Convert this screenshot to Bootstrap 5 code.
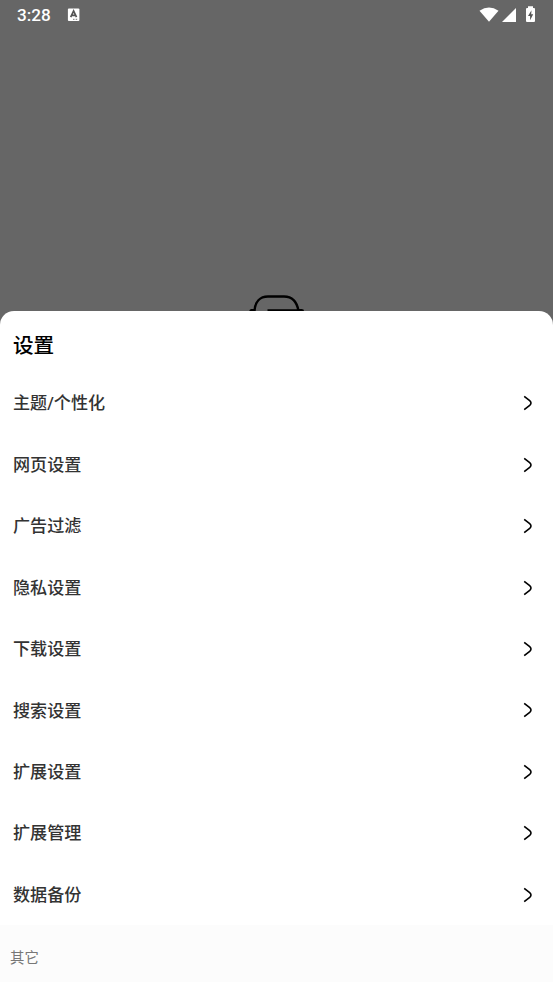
<!DOCTYPE html>
<html lang="zh-CN">
<head>
<meta charset="utf-8">
<meta name="viewport" content="width=device-width, initial-scale=1">
<title>设置</title>
<link href="https://cdn.jsdelivr.net/npm/bootstrap@5.3.0/dist/css/bootstrap.min.css" rel="stylesheet">
<style>
body{height:983px;background:#666;font-family:Roboto,"Noto Sans CJK SC",sans-serif}
.status-strip{height:30px;padding:0 17px;color:#fff;font-size:17.2px;font-weight:500;line-height:30px}
.backdrop-area{height:281px}
.sheet{height:672px;border-radius:14px 14px 0 0}
.sheet-title{height:61.5px;padding:9px 13px 0;font-size:20.6px;font-weight:500;color:#000}
.setting-row{height:61.45px;padding:0 20px 0 13px;font-size:17.1px;font-weight:500;color:#333}
.setting-row span{padding-top:2px}
.section-label{height:57px;padding:9px 10px 0;font-size:14.4px;color:#777;background:#fcfcfc}
svg{display:block;flex:none}
</style>
<script src="https://cdn.jsdelivr.net/npm/bootstrap@5.3.0/dist/js/bootstrap.bundle.min.js"></script>
</head>
<body class="overflow-hidden">
<header class="status-strip d-flex align-items-center justify-content-between">
  <div class="d-flex align-items-center"><span>3:28</span>
    <svg class="ms-3" width="13" height="14" viewBox="0 0 13 14"><rect x=".9" y=".5" width="11.500" height="12.500" rx="1" fill="#fff"/><path d="M3.700 9.200 6.600 3l2.900 6.200M4.600 7.300h4" fill="none" stroke="#555" stroke-width="1.700"/><path d="M6 11.300h1.500m1.200 0h1.500" stroke="#777"/></svg>
  </div>
  <svg width="58" height="18" viewBox="0 0 58 18"><g fill="#fff"><path d="M1.500 4.700Q11-1.800 20.500 4.700L11 15.800Z"/><path d="M38 2v14H24Z"/><path d="M49 2h1V.300h5V2h1q1 0 1 1v12q0 1-1 1h-7q-1 0-1-1V3q0-1 1-1Z"/></g><path d="M53.500 4.200 50 10h2.100v4.200L55.200 8.300h-2Z" fill="#555"/></svg>
</header>
<div class="backdrop-area d-flex align-items-end justify-content-center">
  <svg width="56" height="17" viewBox="0 0 56 17" fill="none" stroke="#000" stroke-width="2.400"><path d="M5.500 17C6 8 11 2.500 19 2.500h16C43 2.500 48 8 49.500 17M1 17q1-1 4-1M18.500 16.500H50M50 16q3 0 4.500 1"/></svg>
</div>
<main class="sheet bg-white overflow-hidden">
  <h1 class="sheet-title d-flex align-items-center m-0">设置</h1>
  <div id="settings"></div>
  <div class="section-label d-flex align-items-center">其它</div>
</main>
<script>
const labels=["主题/个性化","网页设置","广告过滤","隐私设置","下载设置","搜索设置","扩展设置","扩展管理","数据备份"];
document.getElementById("settings").innerHTML=labels.map(label=>`<div class="setting-row d-flex align-items-center justify-content-between"><span>${label}</span><svg width="10" height="16" viewBox="0 0 10 16"><path d="M1.200 1.300 6.700 5.700Q9.300 8 6.700 10.300L1.200 14.700" fill="none" stroke="#000" stroke-width="1.600"/></svg></div>`).join("");
</script>
</body>
</html>
